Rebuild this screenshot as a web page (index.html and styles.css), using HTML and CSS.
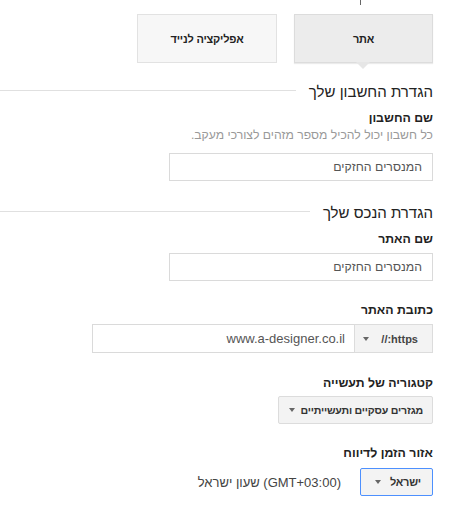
FILE: index.html
```html
<!DOCTYPE html>
<html lang="he" dir="rtl">
<head>
<meta charset="utf-8">
<title>הגדרת חשבון</title>
<link rel="stylesheet" href="styles.css">
</head>
<body>
<div class="page">
  <div class="top-strip"><span class="top-mark"></span></div>
  <div class="tabs">
    <div class="tab tab-active">אתר</div>
    <div class="tab">אפליקציה לנייד</div>
  </div>

  <div class="section-head sh-1">
    <span class="section-title">הגדרת החשבון שלך</span>
    <span class="section-line"></span>
  </div>
  <div class="label l-1">שם החשבון</div>
  <div class="desc">כל חשבון יכול להכיל מספר מזהים לצורכי מעקב.</div>
  <div class="input in-1">המנסרים החזקים</div>

  <div class="section-head sh-2">
    <span class="section-title">הגדרת הנכס שלך</span>
    <span class="section-line"></span>
  </div>
  <div class="label l-2">שם האתר</div>
  <div class="input in-2">המנסרים החזקים</div>

  <div class="label l-3">כתובת האתר</div>
  <div class="url-row">
    <div class="proto-select"><span class="proto-text">https://</span><span class="caret"></span></div>
    <div class="url-input">www.a-designer.co.il</div>
  </div>

  <div class="label l-4">קטגוריה של תעשייה</div>
  <div class="btn-row">
    <div class="select-btn cat-select"><span>מגזרים עסקיים ותעשייתיים</span><span class="caret"></span></div>
  </div>

  <div class="label l-5">אזור הזמן לדיווח</div>
  <div class="tz-row">
    <div class="select-btn tz-select"><span>ישראל</span><span class="caret"></span></div>
    <div class="tz-text">(GMT+03:00) שעון ישראל</div>
  </div>
</div>
</body>
</html>
```

FILE: styles.css
```css
html, body {
  margin: 0;
  padding: 0;
  background: #ffffff;
}

.page {
  direction: rtl;
  padding-right: 37px;
  font-family: "Liberation Sans", Arial, sans-serif;
  color: #222;
}

.top-strip {
  height: 14px;
  display: flex;
}

.top-mark {
  width: 1px;
  height: 5px;
  background: #666;
  margin-right: 72px;
}

.tabs {
  display: flex;
  gap: 17px;
  height: 49px;
}

.tab {
  box-sizing: border-box;
  width: 140px;
  height: 49px;
  background: #f7f7f7;
  border: 1px solid #e2e2e2;
  display: flex;
  align-items: center;
  justify-content: center;
  font-size: 11px;
  letter-spacing: -0.2px;
  font-weight: bold;
  color: #222;
}

.tab-active {
  width: 139px;
  position: relative;
  background: #ececec;
  border-color: #dcdcdc;
  box-shadow: 0 1px 1px rgba(0, 0, 0, 0.08);
}

.tab-active::after {
  content: "";
  position: absolute;
  top: 47px;
  right: 62px;
  border-left: 7px solid transparent;
  border-right: 7px solid transparent;
  border-top: 7px solid #e6e6e6;
}

.section-head {
  display: flex;
  align-items: center;
  gap: 13px;
  height: 20px;
}

.sh-1 { margin-top: 18px; }
.sh-2 { margin-top: 21px; }

.section-title {
  font-size: 15px;
  color: #222;
  white-space: nowrap;
}

.section-line {
  flex: 1;
  height: 1px;
  background: #e0e0e0;
  margin-top: -2px;
}

.label {
  font-size: 12.3px;
  font-weight: bold;
  line-height: 16px;
  color: #222;
}

.l-1 { margin-top: 9px; }
.l-2 { margin-top: 9px; }
.l-3 { margin-top: 21px; }
.l-4 { margin-top: 22px; }
.l-5 { margin-top: 21px; }

.desc {
  margin-top: 1px;
  font-size: 12.2px;
  line-height: 16px;
  color: #999;
}

.input {
  box-sizing: border-box;
  width: 264px;
  height: 28px;
  border: 1px solid #dadada;
  padding: 0 10px;
  display: flex;
  align-items: center;
  font-size: 12.3px;
  color: #555;
  background: #fff;
}

.in-1 { margin-top: 10px; }
.in-2 { margin-top: 6px; }

.url-row {
  margin-top: 6px;
  display: flex;
  height: 29px;
}

.proto-select {
  box-sizing: border-box;
  width: 79px;
  height: 29px;
  background: #f3f3f3;
  border: 1px solid #dcdcdc;
  display: flex;
  align-items: center;
  padding-right: 14px;
  gap: 12px;
  font-size: 11px;
  font-weight: bold;
  color: #444;
}

.url-input {
  box-sizing: border-box;
  width: 262px;
  height: 29px;
  border: 1px solid #dadada;
  border-right: none;
  padding: 0 9px;
  display: flex;
  align-items: center;
  font-size: 13px;
  color: #555;
  background: #fff;
}

.caret {
  display: inline-block;
  width: 0;
  height: 0;
  border-left: 3px solid transparent;
  border-right: 3px solid transparent;
  border-top: 4px solid #666;
}

.btn-row {
  margin-top: 5px;
  display: flex;
}

.select-btn {
  box-sizing: border-box;
  height: 28px;
  background: #f3f3f3;
  border: 1px solid #dcdcdc;
  border-radius: 2px;
  display: flex;
  align-items: center;
  gap: 8px;
  padding: 0 9px 0 12px;
  font-size: 11px;
  letter-spacing: -0.2px;
  font-weight: bold;
  color: #333;
}

.cat-select {
  padding: 0 9px 0 10px;
  gap: 6px;
  font-size: 10.6px;
}

.tz-row {
  margin-top: 7px;
  display: flex;
  align-items: center;
  gap: 19px;
}

.tz-select {
  width: 73px;
  height: 28px;
  border-color: #4d90fe;
  background: #f3f3f3;
  padding-right: 11px;
  gap: 9px;
}

.tz-text {
  font-size: 13px;
  color: #444;
}
```
